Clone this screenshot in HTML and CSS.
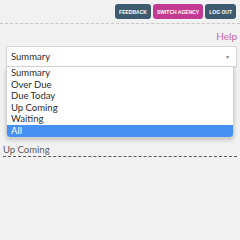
FILE: index.html
```html
<!DOCTYPE html>
<html lang="en">
<head>
    <meta charset="UTF-8">
    <meta name="viewport" content="width=device-width, initial-scale=1.0">
    <title>Tasks</title>
    <link rel="stylesheet" href="styles.css">
</head>
<body>
    <header class="topbar">
        <button class="btn btn-dark">Feedback</button>
        <button class="btn btn-pink">Switch Agency</button>
        <button class="btn btn-dark">Log Out</button>
    </header>

    <div class="help-row">
        <a href="#" class="help">Help</a>
    </div>

    <div class="filter">
        <div class="select">
            <span>Summary</span>
            <span class="caret">&#9662;</span>
        </div>
        <!-- open state of the select list -->
        <ul class="options">
            <li>Summary</li>
            <li>Over Due</li>
            <li>Due Today</li>
            <li>Up Coming</li>
            <li>Waiting</li>
            <li class="active">All</li>
        </ul>
    </div>

    <section class="section">
        <h2 class="section-title">Up Coming</h2>
    </section>
</body>
</html>
```

FILE: styles.css
```css
:root {
    --dark: #3e5b6d;
    --pink: #c23a91;
    --bg: #f1f1f1;
    --text: #2b2b2b;
    --highlight: #4590f0;
}

body {
    font-family: Lato, 'Open Sans', sans-serif;
    background-color: var(--bg);
    color: var(--text);
    margin: 0;
}

.topbar {
    display: flex;
    justify-content: flex-end;
    gap: 2px;
    padding: 4px 4px 4px 0;
    border-bottom: 1px dashed #c6c6c6;
}

.btn {
    height: 15px;
    padding: 0 4px;
    border: none;
    border-radius: 3px;
    color: #ffffff;
    font-family: 'Liberation Sans', sans-serif;
    font-size: 5px;
    font-weight: bold;
    text-transform: uppercase;
    white-space: nowrap;
    cursor: pointer;
}

.btn-dark {
    background-color: var(--dark);
}

.btn-pink {
    background-color: var(--pink);
}

.help-row {
    display: flex;
    justify-content: flex-end;
    padding: 6px 3px 0 0;
}

.help {
    color: #c666a8;
    font-size: 10px;
    line-height: 12px;
    text-decoration: none;
}

.filter {
    position: relative;
    margin: 4px 3px 0 6px;
}

.select {
    height: 21px;
    box-sizing: border-box;
    display: flex;
    align-items: center;
    justify-content: space-between;
    padding: 0 7px 0 4px;
    background-color: #ffffff;
    border: 1px solid #d6d6d6;
    border-radius: 2px;
    box-shadow: 0 1px 1px rgba(0, 0, 0, 0.15);
    font-size: 9.5px;
}

.caret {
    font-size: 6px;
    color: #888888;
}

.options {
    position: absolute;
    top: 21px;
    left: 0;
    width: 228px;
    margin: 0;
    padding: 0;
    list-style: none;
    background-color: #ffffff;
    border: 1px solid #cfcfcf;
    border-top: none;
    border-radius: 0 0 4px 4px;
    box-shadow: 0 2px 4px rgba(0, 0, 0, 0.2);
    box-sizing: border-box;
    overflow: hidden;
    font-size: 9.5px;
    z-index: 2;
}

.options li {
    height: 11.6px;
    line-height: 11.6px;
    padding-left: 4px;
}

.options li.active {
    background-color: var(--highlight);
    color: #ffffff;
}

.section {
    margin: 77px 3px 0 3px;
    border-bottom: 1px dashed #5a5a5a;
}

.section-title {
    margin: 0;
    font-size: 9.5px;
    line-height: 12px;
    font-weight: normal;
    color: #5c5c5c;
}
```
